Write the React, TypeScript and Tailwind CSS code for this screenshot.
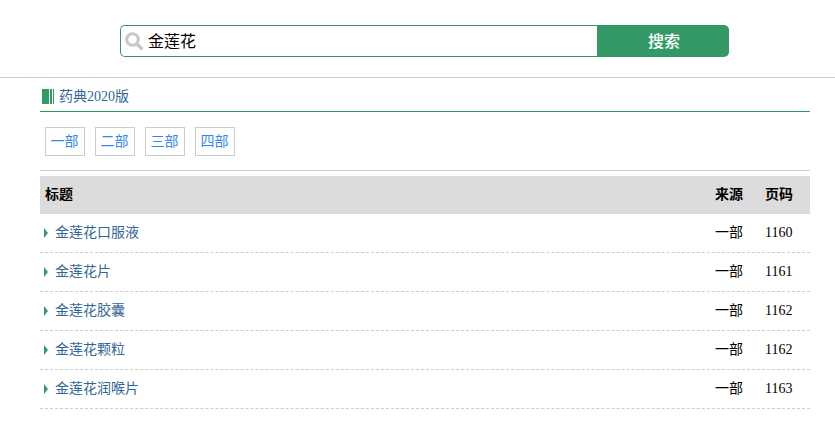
import React from 'react';

const rows = [
  { title: '金莲花口服液', page: '1160' },
  { title: '金莲花片', page: '1161' },
  { title: '金莲花胶囊', page: '1162' },
  { title: '金莲花颗粒', page: '1162' },
  { title: '金莲花润喉片', page: '1163' },
];

const parts = ['一部', '二部', '三部', '四部'];

const SearchIcon = () => (
  <svg width="18" height="18" viewBox="0 0 18 18" fill="none" className="shrink-0">
    <circle cx="7.5" cy="7.5" r="5.8" stroke="#c8c8c8" strokeWidth="3" />
    <path d="M12 12L16.5 16.5" stroke="#c8c8c8" strokeWidth="3.4" strokeLinecap="round" />
  </svg>
);

export default function App() {
  return (
    <div className="h-[436px] w-[835px] bg-white font-['Liberation_Serif','Noto_Sans_CJK_SC',serif] text-sm">
      <div className="h-[78px] border-b border-[#cccccc] pl-[120px] pt-[25px]">
        <div className="flex h-[32px] w-[609px]">
          <div className="flex flex-1 items-center rounded-l-[5px] border border-r-0 border-[#339966] pl-[4px]">
            <SearchIcon />
            <span className="ml-[5px] pt-[2px] text-base text-black">金莲花</span>
          </div>
          <button className="w-[132px] rounded-r-[5px] bg-[#339966] pl-[2px] pt-[2px] text-base font-medium text-white">
            搜索
          </button>
        </div>
      </div>

      <div className="mx-[40px] w-[770px]">
        <div className="flex h-[34px] items-center border-b border-[#339966] pl-[2px] pt-[4px]">
          <div className="mr-[5px] flex h-[15px] gap-[1px]">
            <div className="w-[7px] bg-[#339966]" />
            <div className="w-[2px] bg-[#339966]" />
            <div className="w-[1px] bg-[#339966]" />
          </div>
          <span className="text-[#336699]">药典2020版</span>
        </div>

        <div className="flex h-[59px] gap-[10px] border-b border-[#cccccc] pl-[5px] pt-[15px]">
          {parts.map((part) => (
            <div
              key={part}
              className="flex h-[29px] w-[40px] items-center justify-center border border-[#cccccc] pr-[1px] text-[#3388ee]"
            >
              {part}
            </div>
          ))}
        </div>

        <div className="mt-[5px] flex h-[38px] items-center bg-[#dcdcdc] font-bold text-black">
          <span className="flex-1 pl-[5px]">标题</span>
          <span className="w-[50px]">来源</span>
          <span className="w-[45px]">页码</span>
        </div>

        {rows.map((row) => (
          <div key={row.title} className="flex h-[39px] items-center border-b border-dashed border-[#cccccc]">
            <span className="ml-[4px] mr-[7px] h-0 w-0 border-y-[5px] border-l-[4px] border-y-transparent border-l-[#339966]" />
            <span className="flex-1 text-[#336699]">{row.title}</span>
            <span className="w-[50px] text-black">一部</span>
            <span className="w-[45px] text-black">{row.page}</span>
          </div>
        ))}
      </div>
    </div>
  );
}
